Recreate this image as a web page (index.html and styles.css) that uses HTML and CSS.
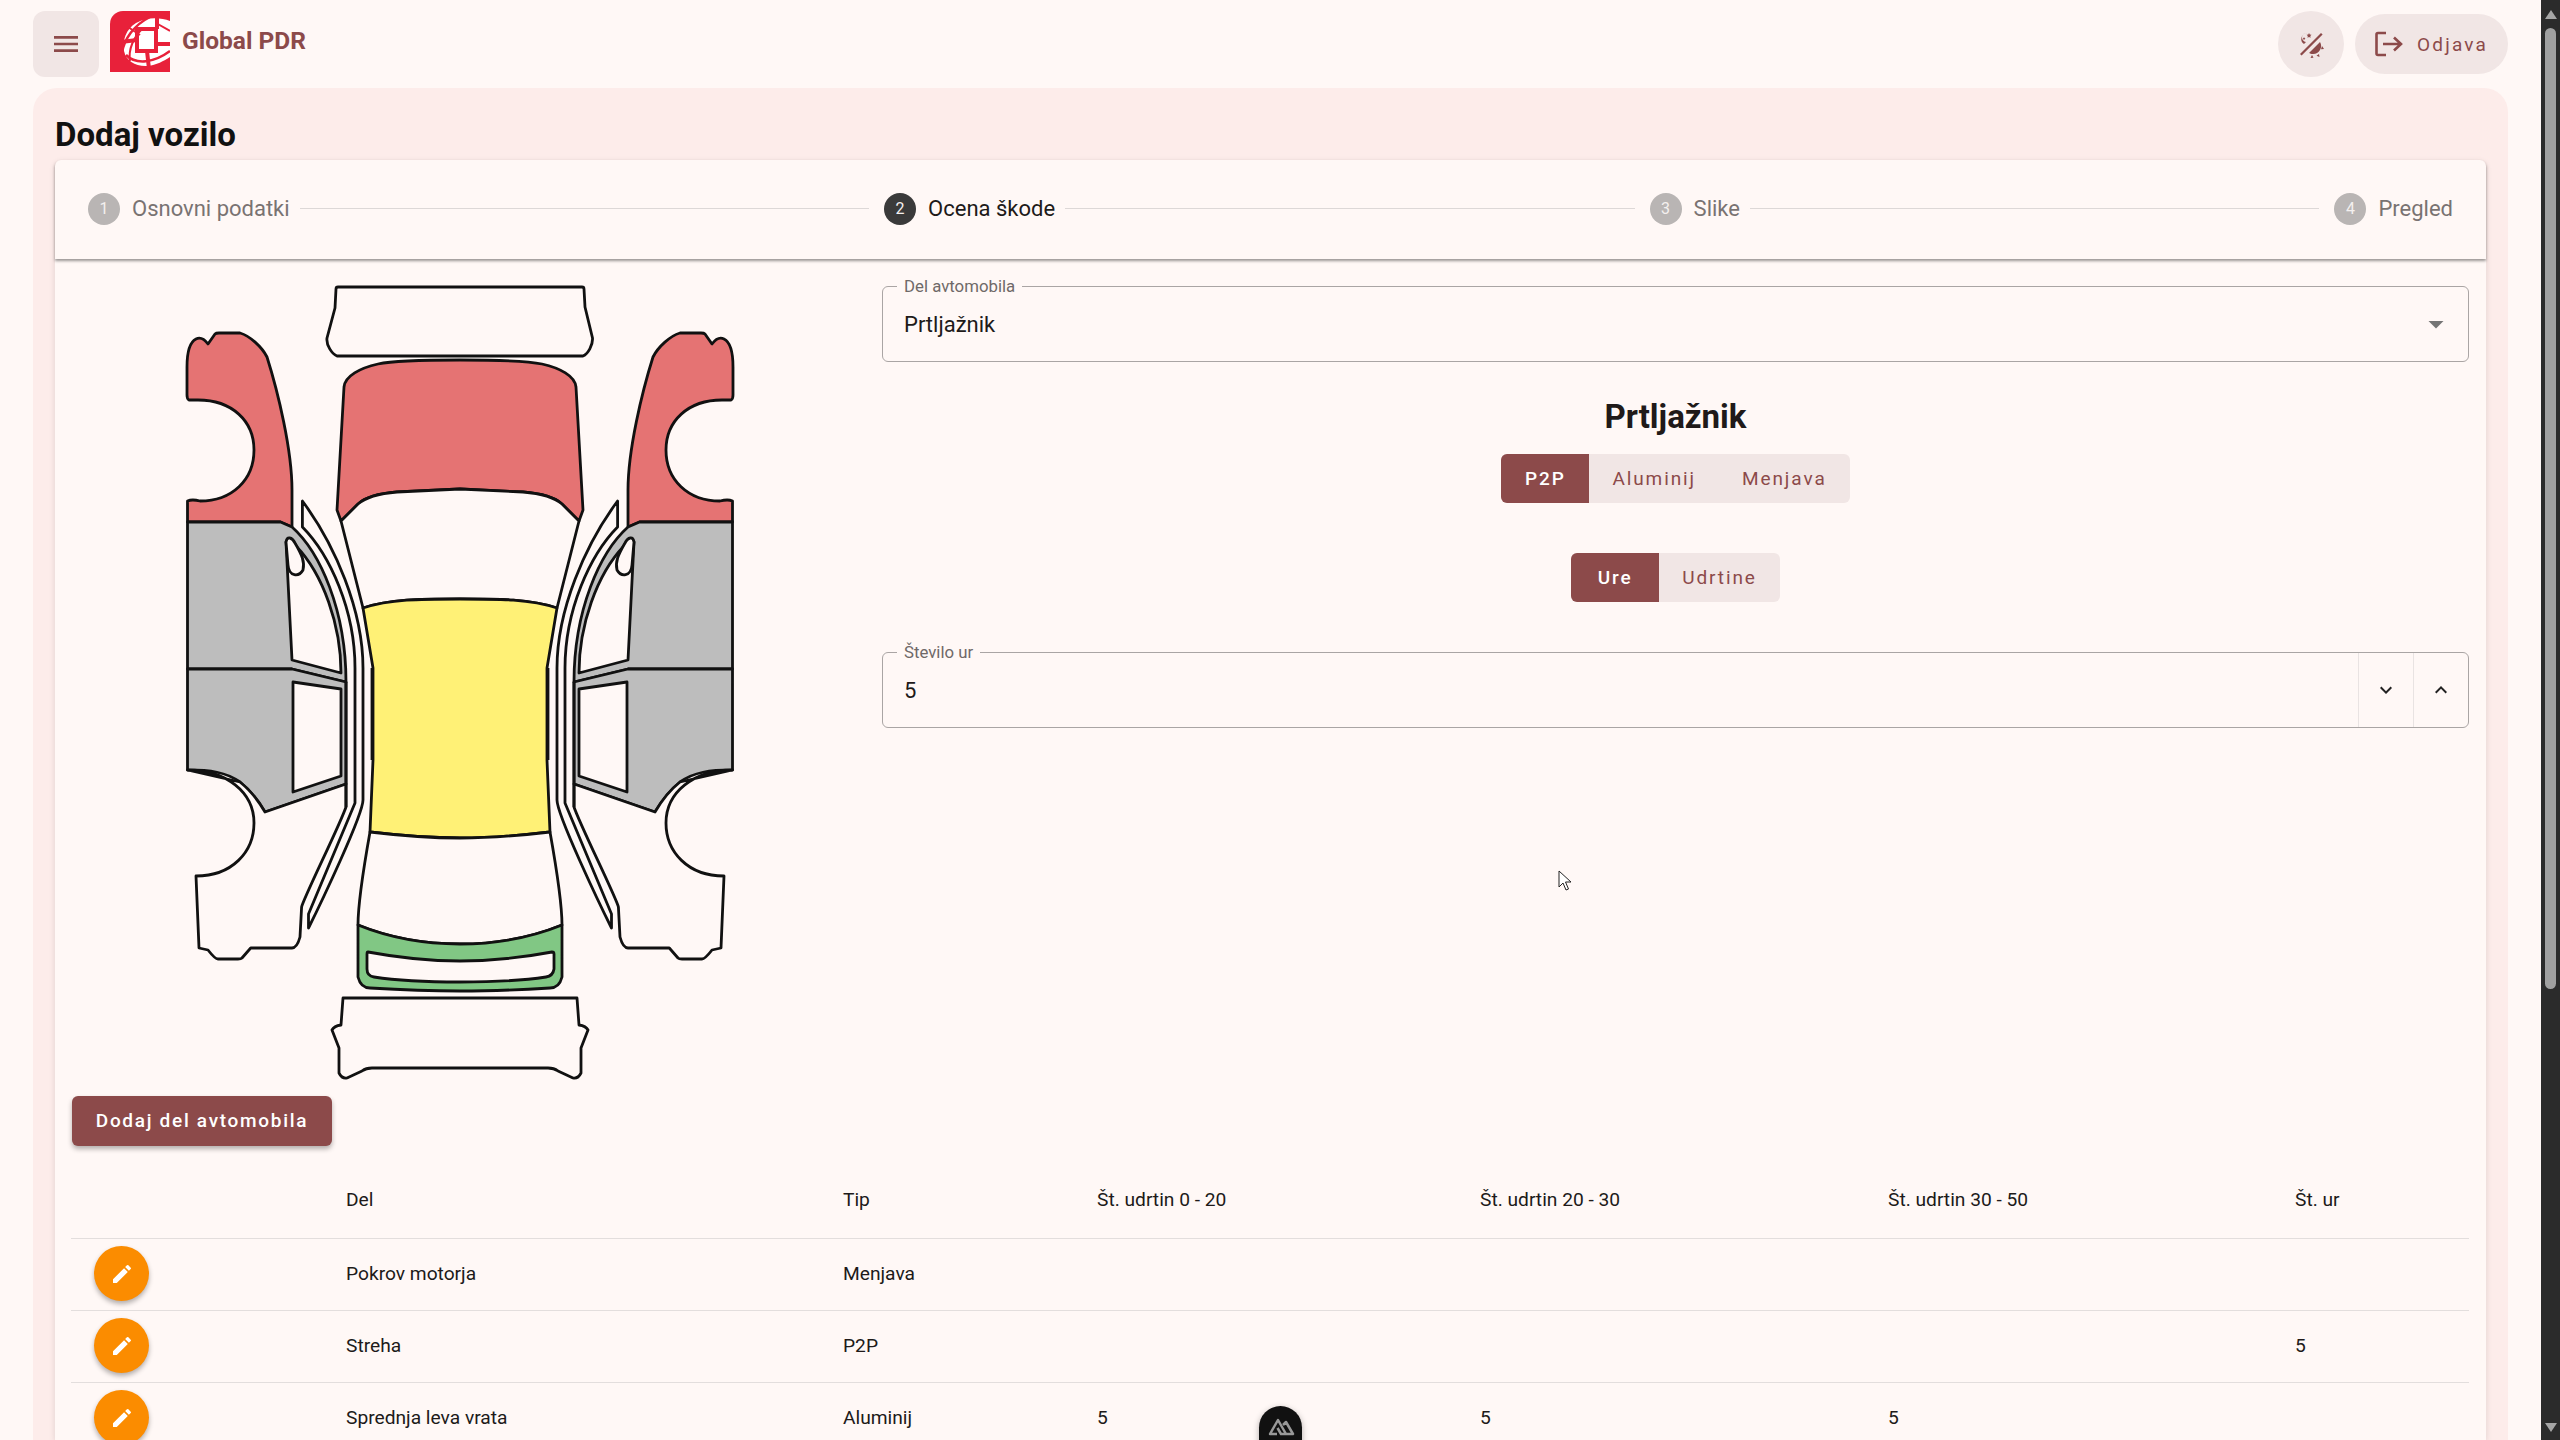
FILE: index.html
```html
<!DOCTYPE html>
<html lang="en">
<head>
  <meta charset="UTF-8">
  <title>Dodaj vozilo</title>
  <link rel="stylesheet" href="styles.css">
</head>
<body>
  <div class="page">
    <header class="topbar">
      <button class="menu-btn" aria-label="Menu">
        <svg width="32" height="32" viewBox="0 0 24 24"><path d="M3 18h18v-2H3v2zm0-5h18v-2H3v2zm0-7v2h18V6H3z" fill="#8c4a4a"/></svg>
      </button>
      <svg class="logo" width="60" height="61" viewBox="0 0 60 61">
        <path d="M13 0H60V61H0V13A13 13 0 0 1 13 0Z" fill="#e8213a"/>
        <path d="M60 10C50 6 36 6 26 12C16 18 12 30 14 40C16 50 26 56 38 55C46 54 54 50 60 46Z" fill="#fff"/>
        <g fill="none" stroke="#e8213a">
          <rect x="27" y="18" width="19" height="22" stroke-width="4"/>
          <path d="M47 18V3M37 40L39 58M46 33H60M27 29L11 31" stroke-width="4"/>
          <path d="M12 42C14 28 24 14 40 6" stroke-width="2.500"/>
          <path d="M20 50C18 38 24 26 32 18" stroke-width="2"/>
          <path d="M18 16L30 24" stroke-width="2"/>
          <path d="M16 44C26 54 44 52 60 40" stroke-width="2.500"/>
          <path d="M46 12L60 20" stroke-width="2"/>
        </g>
      </svg>
      <span class="brand">Global PDR</span>
      <div class="topbar-right">
        <button class="theme-btn" aria-label="Theme">
          <svg width="32" height="32" viewBox="0 0 32 32" fill="#8c4a4a">
            <path d="M5 26 26 5l1.600 1.600-21 21z"/>
            <path d="M12 5a6 6 0 0 0-3 11l2-2a4 4 0 0 1 1-9z"/>
            <path d="M14 5l.8 1.600 1.700.2-1.200 1.200.3 1.700-1.600-.8-1.500.8.3-1.700-1.200-1.200 1.700-.2zM9 9l.5 1 1 .1-.7.7.2 1-1-.5-.9.5.2-1-.7-.7 1-.1z"/>
            <path d="M25 14a8 8 0 0 1-7 12c-2 0-3-.5-4-1z"/>
            <path d="M27 18l2 3-3 .3zM24 26l.5 3-3-1.200zM17 27l1.500 2.800-3 .1z"/>
          </svg>
        </button>
        <button class="logout-btn">
          <svg width="32" height="32" viewBox="0 0 32 32" fill="none" stroke="#8c4a4a" stroke-width="2.600"><path d="M14 5H6a1.500 1.500 0 0 0-1.500 1.500v19A1.500 1.500 0 0 0 6 27h8"/><path d="M11 16h18M22 9.500l7 6.500-7 6.500"/></svg>
          <span>Odjava</span>
        </button>
      </div>
    </header>

    <main class="panel">
      <h1 class="page-title">Dodaj vozilo</h1>
      <section class="card">
        <div class="stepper">
          <div class="step"><span class="step-num">1</span>Osnovni podatki</div>
          <div class="step-line"></div>
          <div class="step active"><span class="step-num">2</span>Ocena škode</div>
          <div class="step-line"></div>
          <div class="step"><span class="step-num">3</span>Slike</div>
          <div class="step-line"></div>
          <div class="step"><span class="step-num">4</span>Pregled</div>
        </div>

        <div class="editor">
          <div class="car-col">
            <svg class="car" width="552" height="800" viewBox="184 284 552 800" stroke="#111" stroke-width="2.800" stroke-linejoin="round">
              <defs>
                <g id="side">
                  <!-- front fender -->
                  <path fill="#e57373" d="M187.500 522V501Q192 499 200 501C232 501 254 480 254 450C254 421 232 400 198 400Q192 400 189 400Q187 399 187 395V367C187 352 190 342 196 339Q202 336 208 344L215 334Q216 333 219 333H240C250 336 262 347 267 357C278 392 292 450 292 490V527L280.500 522Z"/>
                  <!-- doors -->
                  <path fill="#bdbdbd" d="M187.500 522H280.500L292 527C320 552 346 610 346 682L292 669H187.500Z"/>
                  <path fill="#bdbdbd" d="M187.500 669H292L346 682V784L265 812C258 800 250 790 240 782C226 772 210 770 187.500 770Z"/>
                  <path fill="#fff8f6" d="M286 542C288 537 293 540 296 546C323 574 341 625 341 673L292 660Z"/>
                  <path fill="#fff8f6" d="M286 542C287 536 292 537 295 543C302 555 305 562 303 570C299 577 289 577 288 565Z"/>
                  <path fill="#fff8f6" d="M293 682L341 689V776L293 792Z"/>
                  <!-- rear fender -->
                  <path fill="#fff8f6" d="M346 784V807C340 825 304 897 301.600 907L300 937Q297 948 292 948H250.700L242 958Q241 959 238 959H218Q215 959 208 950L199 948L196 876C232 876 254 852 254 823C254 792 226 770 187.500 770L240 782C250 790 258 800 265 812Z"/>
                  <!-- pillar strips -->
                  <path fill="#fff8f6" d="M302.400 501L302.400 527C330 555 355 610 355 668V803L308.500 914V928C320 905 363 815 363 800V668C363 610 335 545 302.400 501Z"/>
                  <path fill="none" d="M346 682V807M372 668V760"/>
                </g>
              </defs>

              <!-- front bumper -->
              <path fill="#fff8f6" d="M336 289Q336 287 338 287H582Q584 287 584 289L585 307L592.500 338C593 345 588 354 583 356H337C332 354 326 345 327 338L335 308Z"/>
              <!-- hood -->
              <path fill="#e57373" d="M460 360C420 360 392 361 378 364C360 368 345 376 344 387L337 510L341 521L358 504C368 495 385 493 397 492L460 489L523 492C535 493 552 495 562 504L579 521L583 510L576 387C575 376 560 368 542 364C528 361 500 360 460 360Z"/>
              <!-- windshield -->
              <path fill="#fff8f6" d="M341 521L358 504C368 495 385 493 397 492L460 489L523 492C535 493 552 495 562 504L579 521L557 608C530 599 500 599 460 599C420 599 390 599 363 608Z"/>
              <!-- roof -->
              <path fill="#fff176" d="M363 608C390 599 420 599 460 599C500 599 530 599 557 608L547 668V760L550 832Q500 838 460 838Q420 838 370 832L373 760V668Z"/>
              <!-- rear glass -->
              <path fill="#fff8f6" d="M370 832Q420 838 460 838Q500 838 550 832C555 860 562 900 562 925C530 938 495 944 460 944C425 944 390 938 358 925C358 900 365 860 370 832Z"/>
              <!-- trunk lid -->
              <path fill="#81c784" fill-rule="evenodd" d="M358 925C390 938 425 944 460 944C495 944 530 938 562 925V977C560 985 555 988 550 988Q500 991 460 991Q420 991 370 988C365 988 360 985 358 977ZM368 952C400 958 430 961 460 961C490 961 520 958 552 952Q554 952 554 954V969Q553 976 546 977C520 981 490 982 460 982C430 982 400 981 374 977Q367 976 367 969V954Q367 952 368 952Z"/>
              <!-- rear bumper -->
              <path fill="#fff8f6" d="M343 998H577L579 1025Q586 1026 588 1030L581 1048V1073Q578 1079 573 1078L558 1071Q554 1068 548 1068H372Q366 1068 362 1071L347 1078Q342 1079 339 1073V1048L332 1030Q334 1026 341 1025Z"/>

              <use href="#side"/>
              <use href="#side" transform="translate(920) scale(-1 1)"/>
            </svg>
            <button class="add-btn">Dodaj del avtomobila</button>
          </div>

          <div class="form-col">
            <div class="field">
              <span class="field-label">Del avtomobila</span>
              <span class="field-value">Prtljažnik</span>
              <svg class="select-arrow" width="36" height="36" viewBox="0 0 24 24"><path d="M7 10l5 5 5-5z" fill="#757575"/></svg>
            </div>
            <h2 class="part-title">Prtljažnik</h2>
            <div class="toggle toggle-first">
              <span class="toggle-item on">P2P</span><span class="toggle-item">Aluminij</span><span class="toggle-item">Menjava</span>
            </div>
            <div class="toggle toggle-second">
              <span class="toggle-item on">Ure</span><span class="toggle-item">Udrtine</span>
            </div>
            <div class="field number-field">
              <span class="field-label">Število ur</span>
              <span class="field-value">5</span>
              <span class="spin">
                <svg width="24" height="24" viewBox="0 0 24 24"><path d="M7.410 8.590 12 13.170l4.590-4.580L18 10l-6 6-6-6z" fill="#222"/></svg>
              </span>
              <span class="spin">
                <svg width="24" height="24" viewBox="0 0 24 24"><path d="M7.410 15.410 12 10.830l4.590 4.580L18 14l-6-6-6 6z" fill="#222"/></svg>
              </span>
            </div>
          </div>
        </div>

        <table class="parts">
          <thead>
            <tr>
              <th class="col-edit"></th><th class="col-part">Del</th><th class="col-type">Tip</th>
              <th class="col-a">Št. udrtin 0 - 20</th><th class="col-b">Št. udrtin 20 - 30</th><th class="col-c">Št. udrtin 30 - 50</th><th>Št. ur</th>
            </tr>
          </thead>
          <tbody>
            <tr>
              <td><button class="edit-btn" aria-label="Uredi"><svg width="24" height="24" viewBox="0 0 24 24"><path d="M3 17.250V21h3.750L17.810 9.940l-3.750-3.750L3 17.250zM20.710 7.040a1 1 0 0 0 0-1.410l-2.340-2.340a1 1 0 0 0-1.410 0l-1.830 1.830 3.750 3.750 1.830-1.830z" fill="#fff"/></svg></button></td>
              <td>Pokrov motorja</td><td>Menjava</td><td></td><td></td><td></td><td></td>
            </tr>
            <tr>
              <td><button class="edit-btn" aria-label="Uredi"><svg width="24" height="24" viewBox="0 0 24 24"><path d="M3 17.250V21h3.750L17.810 9.940l-3.750-3.750L3 17.250zM20.710 7.040a1 1 0 0 0 0-1.410l-2.340-2.340a1 1 0 0 0-1.410 0l-1.830 1.830 3.750 3.750 1.830-1.830z" fill="#fff"/></svg></button></td>
              <td>Streha</td><td>P2P</td><td></td><td></td><td></td><td>5</td>
            </tr>
            <tr>
              <td><button class="edit-btn" aria-label="Uredi"><svg width="24" height="24" viewBox="0 0 24 24"><path d="M3 17.250V21h3.750L17.810 9.940l-3.750-3.750L3 17.250zM20.710 7.040a1 1 0 0 0 0-1.410l-2.340-2.340a1 1 0 0 0-1.410 0l-1.830 1.830 3.750 3.750 1.830-1.830z" fill="#fff"/></svg></button></td>
              <td>Sprednja leva vrata</td><td>Aluminij</td><td>5</td><td>5</td><td>5</td><td></td>
            </tr>
          </tbody>
        </table>
      </section>
    </main>
  </div>

  <svg class="cursor" width="14" height="22" viewBox="0 0 14 22"><path d="M1 1v16l4-4 3 7 2.500-1-3-7h5.500z" fill="#fff" stroke="#222" stroke-width="1"/></svg>

  <div class="devtools">
    <svg width="28" height="20" viewBox="0 0 28 20" fill="none" stroke="#999" stroke-width="2.500" stroke-linejoin="round"><path d="M10 17H3l8-14 8 14h-5l-3.500-6M16 8l3-3 7 12h-7"/></svg>
  </div>

  <div class="scrollbar">
    <span class="scroll-arrow"></span>
    <span class="scroll-thumb"></span>
    <span class="scroll-arrow down"></span>
  </div>
</body>
</html>
```
FILE: styles.css
```css
html, body {
  margin: 0;
  height: 100%;
  overflow: hidden;
}
body {
  font-family: Roboto, "Liberation Sans", sans-serif;
  background: #fff8f6;
  color: #201a19;
}
button {
  font-family: inherit;
  border: none;
  cursor: pointer;
}
.page {
  width: 2541px;
  height: 1440px;
  overflow: hidden;
}
.topbar {
  display: flex;
  align-items: flex-start;
  height: 88px;
  padding: 11px 33px 0 33px;
  box-sizing: border-box;
}
.menu-btn {
  width: 66px;
  height: 66px;
  background: #f1e6e5;
  border-radius: 12px;
  display: flex;
  align-items: center;
  justify-content: center;
  padding: 0;
  margin-right: 11px;
}
.logo {
  flex-shrink: 0;
  margin-right: 12px;
}
.brand {
  font-size: 24.500px;
  font-weight: 700;
  color: #8c4a4a;
  line-height: 60px;
}
.topbar-right {
  margin-left: auto;
  display: flex;
  gap: 11px;
}
.theme-btn {
  width: 66px;
  height: 66px;
  border-radius: 50%;
  background: #f1e6e5;
  display: flex;
  align-items: center;
  justify-content: center;
  padding: 0;
}
.logout-btn {
  height: 60px;
  width: 153px;
  margin-top: 3px;
  border-radius: 30px;
  background: #f1e6e5;
  color: #8c4a4a;
  display: flex;
  align-items: center;
  padding: 0 0 0 17px;
  gap: 13px;
  font-size: 19px;
  letter-spacing: 2.200px;
}
.panel {
  margin: 0 33px;
  background: #fdecea;
  border-radius: 24px 24px 0 0;
  padding: 22px 22px 0;
  height: 1352px;
  box-sizing: border-box;
}
.page-title {
  margin: 0;
  font-size: 33px;
  font-weight: 700;
  line-height: 50px;
  color: #111;
}
.card {
  background: #fff8f6;
  border-radius: 6px 6px 0 0;
  box-shadow: 0 2px 6px rgba(0,0,0,0.12);
  height: 1280px;
}
.stepper {
  display: flex;
  align-items: center;
  height: 99px;
  padding: 0 33px 2px;
  box-sizing: border-box;
  gap: 10px;
  box-shadow: 0 2px 3px rgba(0,0,0,0.4);
  border-radius: 6px 6px 0 0;
  font-size: 22px;
  color: #797372;
}
.step {
  display: flex;
  align-items: center;
  gap: 12px;
  white-space: nowrap;
}
.step.active {
  color: #201a19;
}
.step-num {
  width: 32px;
  height: 32px;
  border-radius: 50%;
  background: #b9b5b4;
  color: #f4f0ef;
  font-size: 16px;
  display: flex;
  align-items: center;
  justify-content: center;
}
.step.active .step-num {
  background: #3a3a3a;
}
.step-line {
  flex: 1;
  height: 1px;
  margin-right: 5px;
  background: #ddd8d7;
}
.editor {
  display: flex;
  height: 888px;
  padding: 0 17px 0 16px;
}
.car-col {
  width: 811px;
  display: flex;
  flex-direction: column;
  align-items: flex-start;
}
.car {
  margin: 25px 0 0 113px;
  flex-shrink: 0;
}
.add-btn {
  margin: 12px 0 0 1px;
  width: 260px;
  height: 50px;
  flex-shrink: 0;
  border-radius: 6px;
  background: #8c4a4a;
  color: #fff;
  font-size: 19px;
  font-weight: 500;
  letter-spacing: 1.700px;
  box-shadow: 0 3px 5px rgba(0,0,0,0.3);
  padding: 0 0 2px;
}
.form-col {
  flex: 1;
  display: flex;
  flex-direction: column;
  align-items: center;
  padding-top: 27px;
}
.field {
  position: relative;
  width: 100%;
  height: 76px;
  box-sizing: border-box;
  border: 1.500px solid #aaa5a4;
  border-radius: 6px;
  display: flex;
  align-items: center;
  padding-left: 21px;
  font-size: 22px;
}
.field-label {
  position: absolute;
  left: 14px;
  top: -10px;
  padding: 0 7px;
  background: #fff8f6;
  font-size: 16.800px;
  line-height: 18px;
  color: #6f6968;
}
.field-value {
  flex: 1;
}
.select-arrow {
  margin-right: 14px;
}
.part-title {
  margin: 31px 0 0;
  font-size: 33px;
  font-weight: 700;
  line-height: 48px;
}
.toggle {
  display: flex;
  border-radius: 6px;
  overflow: hidden;
  background: #f1e6e5;
  height: 49px;
  color: #8c4a4a;
  font-size: 19px;
  letter-spacing: 1.900px;
}
.toggle-first {
  margin-top: 13px;
}
.toggle-second {
  margin-top: 50px;
}
.toggle-item {
  display: flex;
  align-items: center;
  padding: 0 23px;
}
.toggle-item.on {
  min-width: 88px;
  padding: 0;
  justify-content: center;
  background: #8c4a4a;
  color: #fff;
  font-weight: 500;
}
.number-field {
  margin-top: 50px;
  padding-right: 0;
}
.spin {
  width: 54px;
  height: 100%;
  border-left: 1px solid #e9e3e2;
  display: flex;
  align-items: center;
  justify-content: center;
}
.parts {
  width: 2398px;
  margin-left: 16px;
  border-collapse: collapse;
  table-layout: fixed;
  font-size: 19.200px;
  color: #201a19;
}
.parts th {
  font-weight: 400;
  text-align: left;
  height: 78px;
  padding: 13px 0 0;
  border-bottom: 1.500px solid #e3dedd;
}
.parts td {
  height: 69px;
  padding: 0 0 2px;
  border-bottom: 1.500px solid #e3dedd;
}
.col-edit { width: 275px; }
.col-part { width: 497px; }
.col-type { width: 254px; }
.col-a { width: 383px; }
.col-b { width: 408px; }
.col-c { width: 407px; }
.edit-btn {
  width: 55px;
  height: 55px;
  margin-left: 23px;
  border-radius: 50%;
  background: #fb8c00;
  box-shadow: 0 3px 5px rgba(0,0,0,0.3);
  display: flex;
  align-items: center;
  justify-content: center;
  padding: 0;
}
.cursor {
  position: absolute;
  left: 1558px;
  top: 870px;
}
.devtools {
  position: absolute;
  left: 1259px;
  top: 1406px;
  width: 43px;
  height: 60px;
  border-radius: 22px;
  background: #111;
  box-shadow: 0 2px 6px rgba(0,0,0,0.3);
  display: flex;
  justify-content: center;
  padding-top: 11px;
  box-sizing: border-box;
}
.scrollbar {
  position: absolute;
  right: 0;
  top: 0;
  width: 19px;
  height: 1440px;
  background: #2b2b2b;
  display: flex;
  flex-direction: column;
  align-items: center;
}
.scroll-arrow {
  width: 0;
  height: 0;
  margin-top: 10px;
  border-left: 6px solid transparent;
  border-right: 6px solid transparent;
  border-bottom: 9px solid #a5a5a5;
}
.scroll-arrow.down {
  margin: auto 0 8px;
  border-bottom: none;
  border-top: 9px solid #a5a5a5;
}
.scroll-thumb {
  width: 11px;
  height: 961px;
  margin-top: 9px;
  border-radius: 6px;
  background: #a0a0a0;
}
```
